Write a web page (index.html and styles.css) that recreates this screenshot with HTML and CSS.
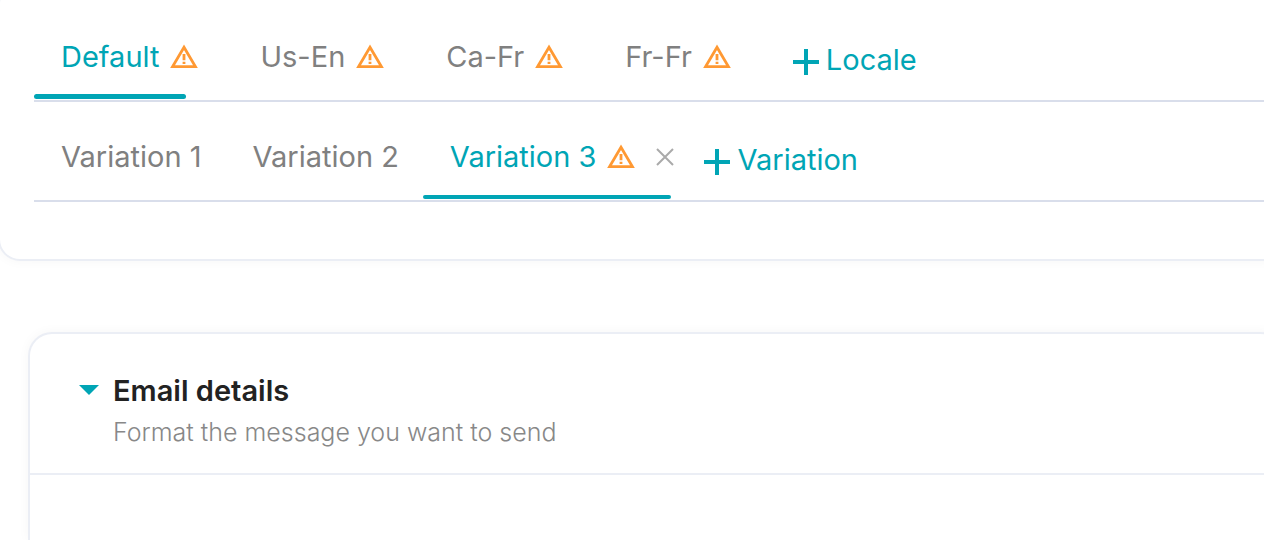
FILE: index.html
```
<!DOCTYPE html>
<html lang="en">
<head>
  <meta charset="UTF-8" />
  <title>Email message</title>
  <link rel="stylesheet" href="styles.css">
</head>
<body>
  <!-- shared warning icon -->
  <svg width="0" height="0" class="defs">
    <symbol id="warning" viewBox="0 0 28 25">
      <path d="M14 3.2 L25.4 22.6 H2.6 Z" fill="none" stroke="currentColor" stroke-width="2.8" />
      <path d="M14 10 V16.2 M14 17.8 V20" fill="none" stroke="currentColor" stroke-width="2.8" />
    </symbol>
  </svg>

  <section class="card content-card">
    <div class="tabs locales">
      <div class="tab active">
        <button class="tab-label">Default</button>
        <svg class="warning"><use href="#warning" /></svg>
      </div>
      <div class="tab">
        <button class="tab-label">Us-En</button>
        <svg class="warning"><use href="#warning" /></svg>
      </div>
      <div class="tab">
        <button class="tab-label">Ca-Fr</button>
        <svg class="warning"><use href="#warning" /></svg>
      </div>
      <div class="tab">
        <button class="tab-label">Fr-Fr</button>
        <svg class="warning"><use href="#warning" /></svg>
      </div>
      <button class="add">
        <svg class="plus" viewBox="0 0 26 26"><path d="M13 0 V26 M0 13 H26" /></svg>
        Locale
      </button>
    </div>

    <div class="tabs variations">
      <div class="tab">
        <button class="tab-label">Variation 1</button>
      </div>
      <div class="tab">
        <button class="tab-label">Variation 2</button>
      </div>
      <div class="tab active">
        <button class="tab-label">Variation 3</button>
        <svg class="warning"><use href="#warning" /></svg>
        <button class="close" aria-label="Remove variation">
          <svg viewBox="0 0 18 18"><path d="M1 1 L17 17 M17 1 L1 17" /></svg>
        </button>
      </div>
      <button class="add">
        <svg class="plus" viewBox="0 0 26 26"><path d="M13 0 V26 M0 13 H26" /></svg>
        Variation
      </button>
    </div>
  </section>

  <details class="card details-card" open>
    <summary>
      <svg class="caret" viewBox="0 0 20 10"><path d="M0 0 H20 L10 10 Z" /></svg>
      <div>
        <h2>Email details</h2>
        <p>Format the message you want to send</p>
      </div>
    </summary>
  </details>
</body>
</html>
```

FILE: styles.css
```
* {
  box-sizing: border-box;
}
body {
  display: flex;
  flex-direction: column;
  min-height: 100vh;
  margin: 0;
  overflow: hidden;
  background: #fff;
  color: #808080;
  font-family: Inter, "Liberation Sans", sans-serif;
  font-size: 29px;
  line-height: 36px;
}
button {
  padding: 0;
  border: none;
  background: none;
  color: inherit;
  font: inherit;
  cursor: pointer;
}
.defs {
  position: absolute;
}
.card {
  border: 2px solid #ebeef5;
  background: #fff;
  box-shadow: 0 0 12px rgba(0, 0, 0, 0.04);
}
.content-card {
  margin: -18px -20px 71px -2px;
  padding: 18px 0 57px 34px;
  border-radius: 22px;
}

/* tabs */
.tabs {
  display: flex;
  height: 100px;
  padding-top: 12px;
  border-bottom: 2px solid #d9deeb;
}
.locales {
  gap: 35px;
}
.variations {
  gap: 24px;
}
.tab {
  position: relative;
  display: flex;
  align-items: center;
  padding-left: 27px;
}
.tab.active {
  color: #00a5b5;
}
.tab.active::after {
  content: "";
  position: absolute;
  left: 0;
  bottom: 1px;
  border-radius: 3px;
  background: #00a5b5;
}
.locales .tab.active::after {
  right: 12px;
  height: 5px;
}
.variations .tab.active::after {
  right: 3px;
  height: 4px;
}
.warning {
  width: 28px;
  height: 25px;
  margin: 0 0 2px 11px;
  color: #ff9933;
}
.close {
  margin-left: 21px;
}
.close svg {
  display: block;
  width: 18px;
  height: 18px;
  fill: none;
  stroke: #aaa;
  stroke-width: 2;
}
.add {
  display: flex;
  align-items: center;
  gap: 7px;
  padding-top: 6px;
  color: #00a5b5;
}
.locales .add {
  padding-left: 27px;
}
.variations .add {
  padding-left: 6px;
}
.plus {
  width: 26px;
  height: 26px;
  margin-top: 3px;
  fill: none;
  stroke: currentColor;
  stroke-width: 4;
}

/* email details */
.details-card {
  flex: 1;
  margin: 0 -20px 0 28px;
  border-bottom: none;
  border-radius: 24px 24px 0 0;
}
summary {
  display: flex;
  gap: 14px;
  padding: 39px 49px 23px;
  border-bottom: 2px solid #ebeef5;
  list-style: none;
  cursor: pointer;
}
.caret {
  width: 20px;
  height: 10px;
  margin-top: 12px;
  fill: #00a5b5;
}
h2 {
  margin: 0;
  color: #222;
  font-size: 29px;
  font-weight: 600;
}
p {
  margin: 5px 0 0;
  color: #888;
  font-size: 25px;
  font-weight: 300;
}
```
